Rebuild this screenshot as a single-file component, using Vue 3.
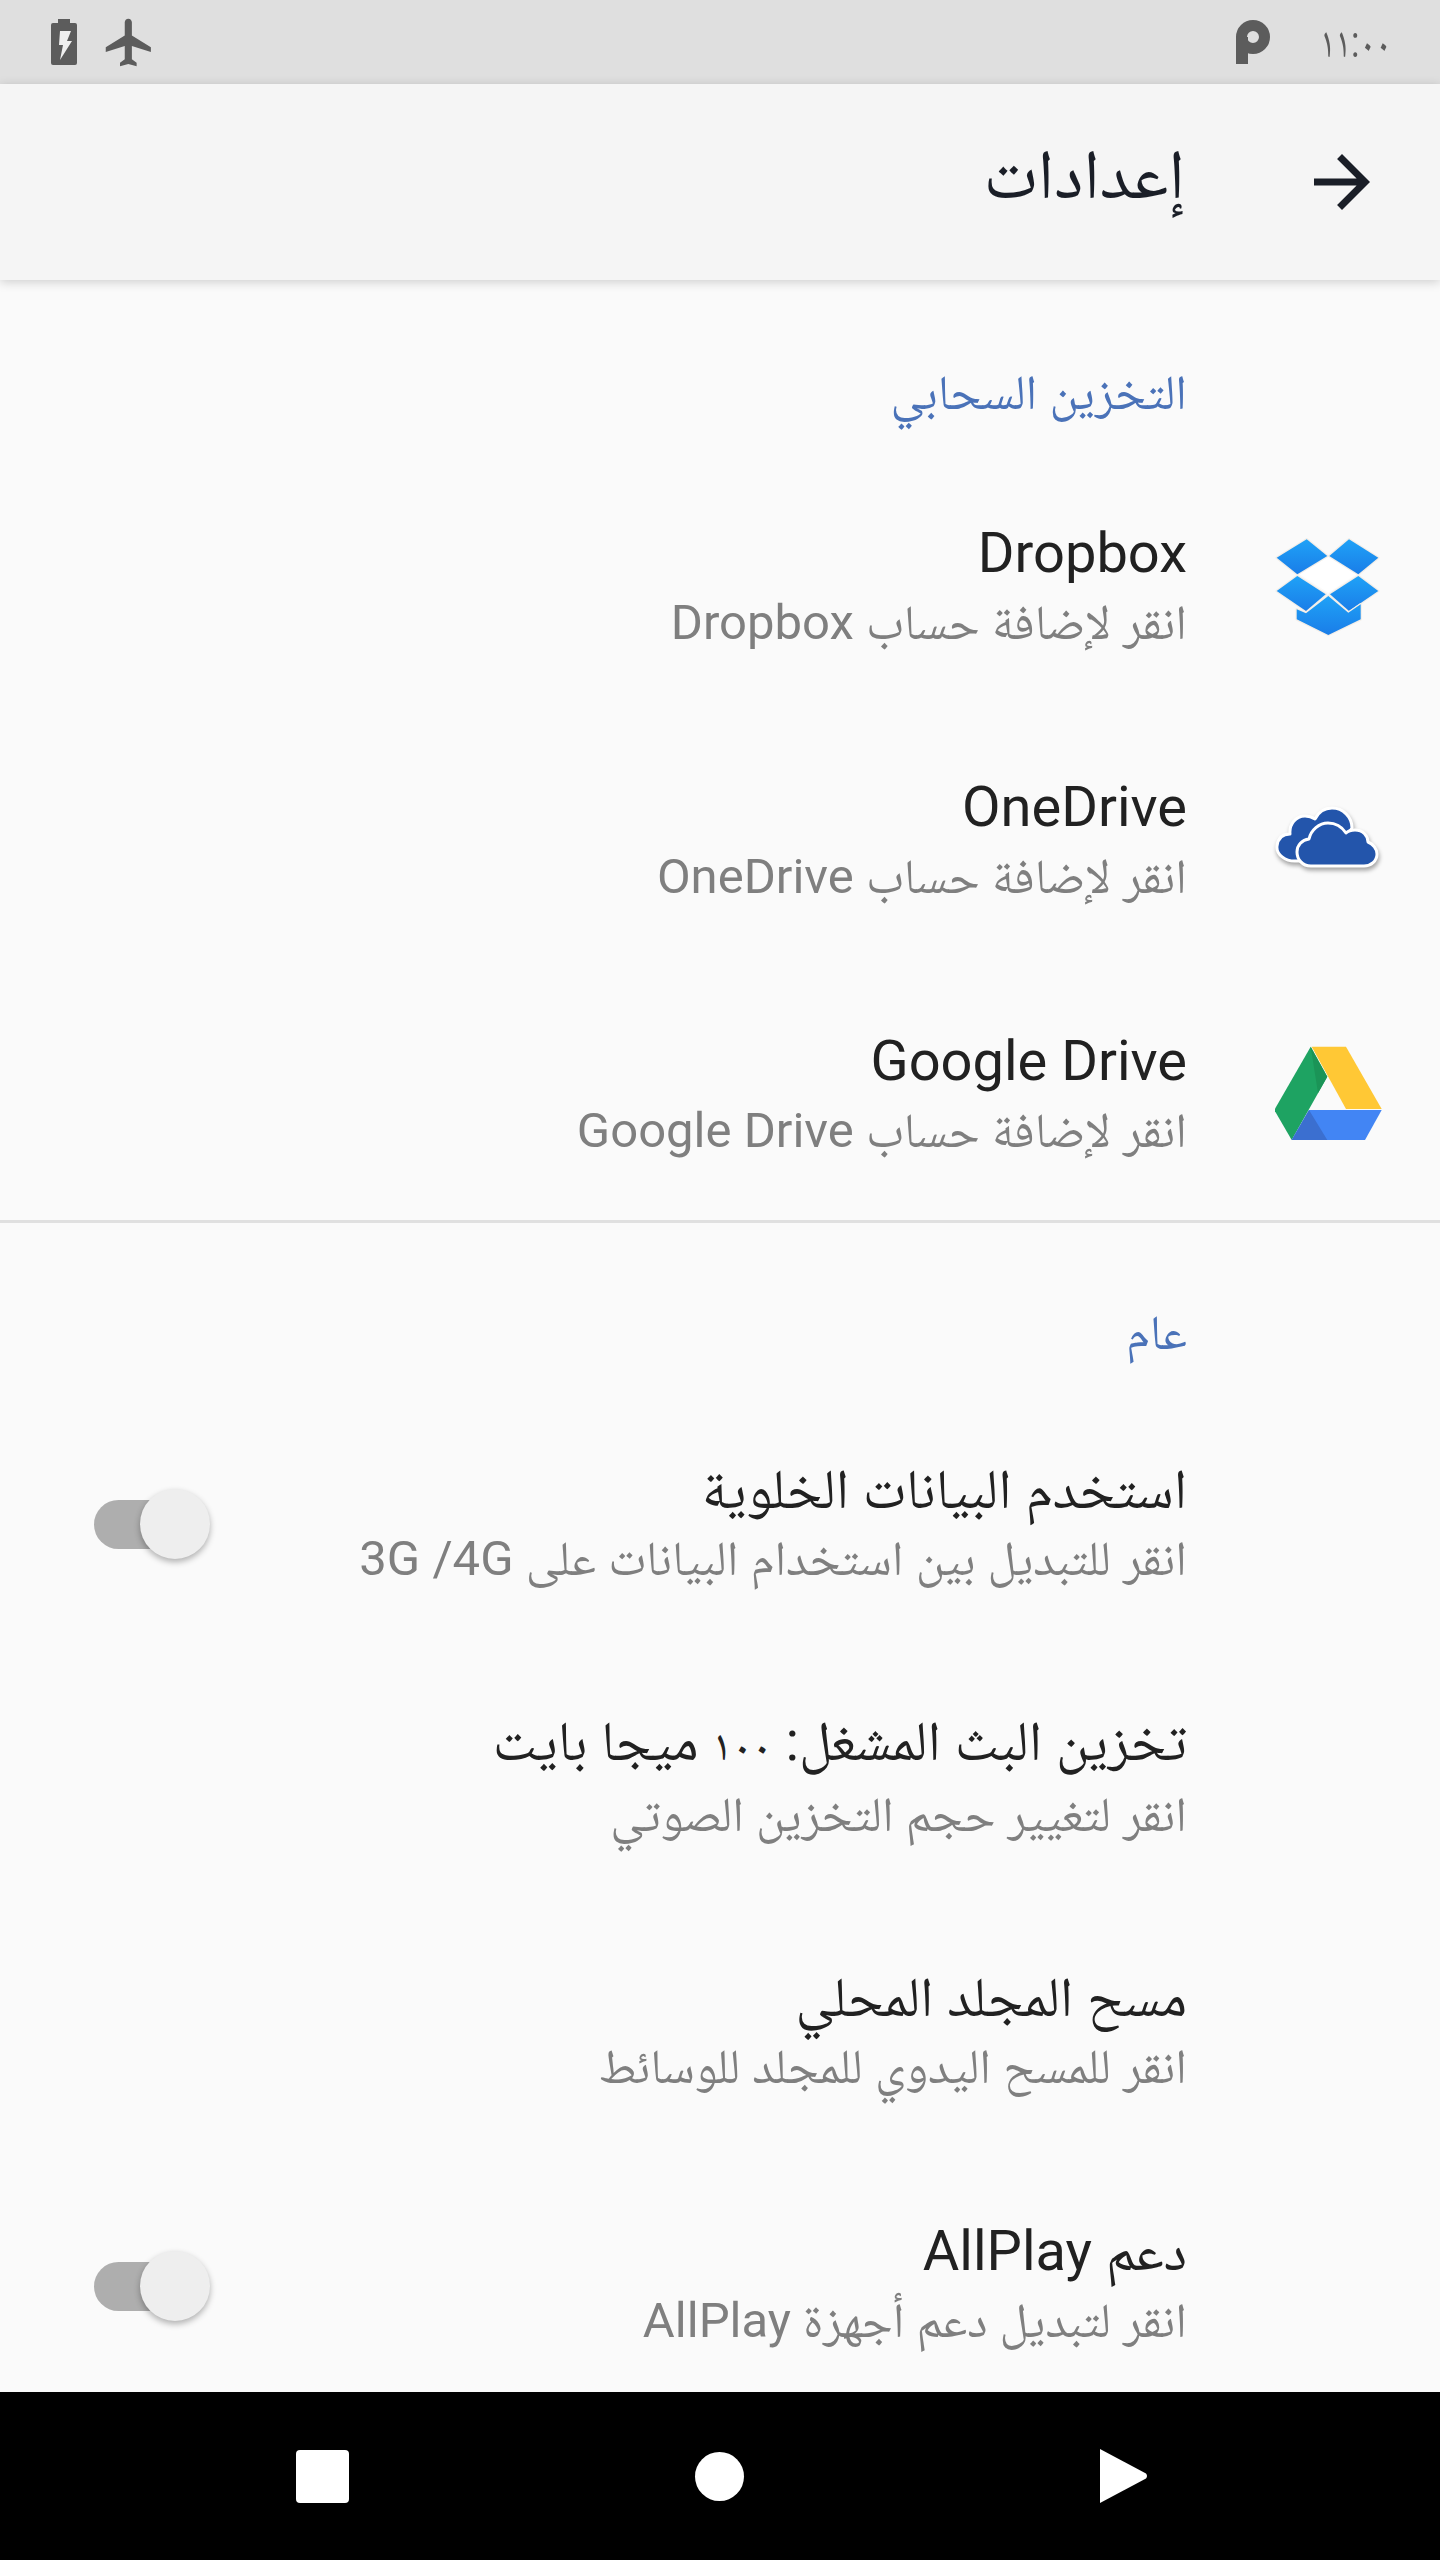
<template>
  <div class="screen">
    <div class="status-bar">
      <div class="status-left">
        <svg class="battery" viewBox="0 0 26 46" width="26" height="46">
          <path d="M7 0h12v4h5a2 2 0 0 1 2 2v38a2 2 0 0 1-2 2H2a2 2 0 0 1-2-2V6a2 2 0 0 1 2-2h5z" fill="#5c5c5c" />
          <path d="M9 12h11l-4 10h5L9 41l3-15H8z" fill="#efefef" />
        </svg>
        <svg class="plane" viewBox="0 0 24 24" width="57" height="57">
          <path d="M21 16v-2l-8-5V3.5c0-.83-.67-1.5-1.5-1.5S10 2.67 10 3.5V9l-8 5v2l8-2.5V19l-2 1.5V22l3.5-1 3.5 1v-1.5L13 19v-5.5l8 2.5z" fill="#5c5c5c" />
        </svg>
      </div>
      <div class="status-right">
        <span class="status-p"></span>
        <span class="status-time">١١:٠٠</span>
      </div>
    </div>

    <header class="toolbar">
      <span class="toolbar-title">إعدادات</span>
      <svg class="back" viewBox="0 0 24 24" width="84" height="84">
        <path d="M12 4l-1.41 1.41L16.17 11H4v2h12.17l-5.58 5.59L12 20l8-8z" fill="#1a1e27" />
      </svg>
    </header>

    <main class="content" dir="rtl">
      <section class="section cloud-section">
        <h2 class="section-title">التخزين السحابي</h2>
        <div v-for="item in cloud" :key="item.title" class="row">
          <div class="row-icon">
            <svg v-if="item.icon === 'dropbox'" class="dropbox" viewBox="35 20 108 108" width="108" height="108">
              <defs>
                <linearGradient id="dbx" x1="0" y1="0" x2="0" y2="1">
                  <stop offset="0" stop-color="#1fa2f7" />
                  <stop offset="1" stop-color="#1a7de8" />
                </linearGradient>
              </defs>
              <polygon points="88.300,46 116.700,63.300 88.300,81.700 59.300,63.300" fill="#fff" />
              <g fill="url(#dbx)" stroke="#f3eee8" stroke-width="2.500" stroke-linejoin="round">
                <polygon points="66.700,28.300 87.300,45 57.300,63.300 36.700,46.700" />
                <polygon points="109,28.300 138.300,46.700 118.300,63.300 89.300,45" />
                <polygon points="57.300,65 85.700,83.300 66,100 36.700,80" />
                <polygon points="118.300,65 138.300,80 109,100 90,83.300" />
                <polygon points="88.300,85 108.300,101.700 120.700,93.300 120.700,108.300 88.300,124 56.700,108.300 56.700,98.300 66,102.300" />
              </g>
            </svg>
            <svg v-else-if="item.icon === 'onedrive'" class="cloud" viewBox="35 7 108 108" width="108" height="108">
              <g fill="#2355ab" stroke="#fff" stroke-width="3" stroke-linejoin="round">
                <path d="M57 83C45 84 36 76 37 68C38 60 43 56 50 56C49 46 56 38 65 38C69 38 72 39 75 41C78 35 84 30 92 30C103 30 112 39 112 50L90 83Z" />
                <path d="M71 88C62 88 57 81 57 74C57 67 62 62 69 61C71 52 79 45 88 45C96 45 102 49 106 55C109 52 112 52 115 52C123 52 128 58 128 64C133 66 137 71 137 76C137 83 131 88 124 88Z" />
              </g>
            </svg>
            <svg v-else viewBox="35 14 108 108" width="108" height="108">
              <polygon points="70.700,21.700 87.300,51.700 51.700,115 34.300,85" fill="#1ea362" />
              <polygon points="70.700,21.700 87.300,51.700 78,68" fill="#1b9457" />
              <polygon points="71.700,21.700 106,21.700 141.700,84 106,84" fill="#ffc835" />
              <polygon points="69,85 141.700,85 125,115 51.700,115" fill="#4285f4" />
              <polygon points="69,85 87.300,115 51.700,115" fill="#3b6fd0" />
            </svg>
          </div>
          <div class="row-text">
            <div class="row-title">{{ item.title }}</div>
            <div class="row-sub">{{ item.sub }}</div>
          </div>
        </div>
      </section>

      <section class="section">
        <h2 class="section-title">عام</h2>
        <div v-for="item in general" :key="item.title" class="row">
          <div class="row-icon"></div>
          <div class="row-text">
            <div class="row-title">
              <span v-for="(part, i) in splitDigits(item.title)" :key="i" :class="{ digits: i % 2 === 1 }">{{ part }}</span>
            </div>
            <div class="row-sub">{{ item.sub }}</div>
          </div>
          <div v-if="item.toggle" class="switch">
            <span class="switch-track"></span>
            <span class="switch-thumb"></span>
          </div>
        </div>
      </section>
    </main>

    <nav class="nav-bar">
      <span class="nav-square"></span>
      <span class="nav-circle"></span>
      <svg class="nav-play" viewBox="0 0 49 56" width="49" height="56">
        <path d="M1 1L47 25.500Q49 28 47 30.500L1 55Z" fill="#fff" />
      </svg>
    </nav>
  </div>
</template>

<script setup>
const cloud = [
  { icon: 'dropbox', title: 'Dropbox', sub: 'انقر لإضافة حساب Dropbox' },
  { icon: 'onedrive', title: 'OneDrive', sub: 'انقر لإضافة حساب OneDrive' },
  { icon: 'drive', title: 'Google Drive', sub: 'انقر لإضافة حساب Google Drive' }
]

const general = [
  { title: 'استخدم البيانات الخلوية', sub: 'انقر للتبديل بين استخدام البيانات على 3G /4G', toggle: true },
  { title: 'تخزين البث المشغل: ١٠٠ ميجا بايت', sub: 'انقر لتغيير حجم التخزين الصوتي' },
  { title: 'مسح المجلد المحلي', sub: 'انقر للمسح اليدوي للمجلد للوسائط' },
  { title: 'دعم AllPlay', sub: 'انقر لتبديل دعم أجهزة AllPlay', toggle: true }
]

// arabic digits come out wider than in the reference, so they get a smaller size
function splitDigits(text) {
  return text.split(/([٠-٩]+)/)
}
</script>

<style>
html, body { background: #fafafa; }
</style>

<style scoped>
.screen {
  width: 1440px;
  height: 2560px;
  display: flex;
  flex-direction: column;
  overflow: hidden;
  background: #fafafa;
  font-family: Roboto, "Noto Naskh Arabic", "Noto Sans Arabic", "DejaVu Sans", sans-serif;
}

.status-bar {
  height: 84px;
  flex: none;
  display: flex;
  justify-content: space-between;
  align-items: center;
  background: #dfdfdf;
  padding: 0 49px 0 51px;
}

.status-left, .status-right {
  display: flex;
  align-items: center;
}

.battery { margin-right: 24px; }

.status-p {
  width: 34px;
  height: 44px;
  position: relative;
  margin-right: 50px;
}

.status-p::before {
  content: '';
  position: absolute;
  left: 0;
  top: 0;
  width: 34px;
  height: 34px;
  box-sizing: border-box;
  border: 11px solid #5c5c5c;
  border-radius: 50%;
}

.status-p::after {
  content: '';
  position: absolute;
  left: 0;
  top: 17px;
  width: 12px;
  height: 27px;
  background: #5c5c5c;
}

.status-time {
  font-size: 35px;
  color: #5c5c5c;
  line-height: 1;
  transform: scaleY(1.25);
}

.toolbar {
  height: 196px;
  flex: none;
  display: flex;
  align-items: center;
  justify-content: flex-end;
  background: #f5f5f5;
  padding-right: 56px;
  box-shadow: 0 2px 10px rgba(0, 0, 0, 0.18);
  position: relative;
}

.toolbar-title {
  font-size: 70px;
  color: #1a1e27;
  margin-right: 115px;
}

.content {
  flex: 1;
  min-height: 0;
  overflow: hidden;
}

.section + .section { border-top: 3px solid #e0e0e0; }

.section-title {
  margin: 0;
  height: 178px;
  padding: 85px 253px 0 0;
  box-sizing: border-box;
  font-size: 49px;
  font-weight: 400;
  line-height: 56px;
  color: #4a72b8;
}

.section + .section .section-title {
  height: 172px;
  padding-top: 82px;
}

.row {
  height: 254px;
  display: flex;
  align-items: center;
  padding: 0 57px;
  position: relative;
}

.row-icon {
  width: 108px;
  flex: none;
  display: flex;
  margin-left: 88px;
}

.dropbox polygon { paint-order: stroke; }

.cloud { filter: drop-shadow(1px 3px 2px rgba(0, 0, 0, 0.35)); }

.cloud-section .row-text { padding-top: 3px; }

.row-title {
  font-size: 56px;
  line-height: 70px;
  color: #212121;
}

.digits { font-size: 44px; }

.row-sub {
  font-size: 49px;
  line-height: 64px;
  margin-top: 3px;
  color: #7f7f7f;
}

.switch {
  width: 116px;
  height: 71px;
  margin-right: auto;
  margin-left: 37px;
  position: relative;
  top: 2px;
  direction: ltr;
}

.switch-track {
  position: absolute;
  left: 0;
  top: 11px;
  width: 100px;
  height: 49px;
  border-radius: 25px;
  background: #aeaeae;
}

.switch-thumb {
  position: absolute;
  left: 46px;
  top: 0;
  width: 70px;
  height: 70px;
  border-radius: 50%;
  background: #eeeeee;
  box-shadow: 0 3px 6px rgba(0, 0, 0, 0.3);
}

.nav-bar {
  height: 168px;
  flex: none;
  background: #000;
  display: flex;
  align-items: center;
}

.nav-square {
  width: 53px;
  height: 53px;
  border-radius: 4px;
  background: #fff;
  margin-left: 296px;
}

.nav-circle {
  width: 49px;
  height: 49px;
  border-radius: 50%;
  background: #fff;
  margin-left: 346px;
}

.nav-play { margin-left: 355px; }
</style>
